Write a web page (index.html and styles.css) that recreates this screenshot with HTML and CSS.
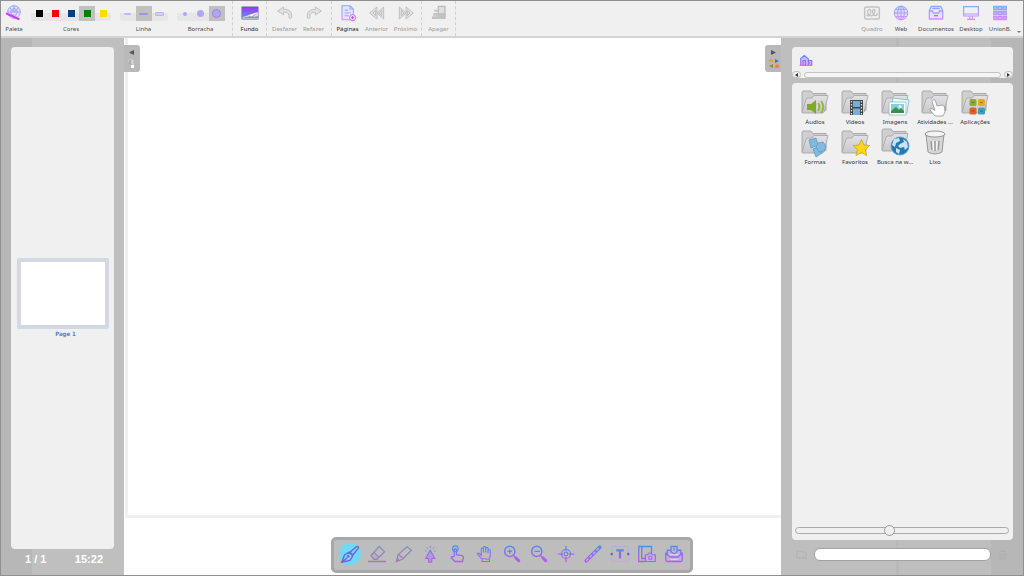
FILE: index.html
```html
<!DOCTYPE html>
<html lang="pt">
<head>
<meta charset="utf-8">
<title>Quadro</title>
<link rel="stylesheet" href="styles.css">
</head>
<body>
<svg class="defs" aria-hidden="true">
  <defs>
    <linearGradient id="g" gradientUnits="userSpaceOnUse" x1="0" y1="2" x2="0" y2="22"><stop offset="0" stop-color="#4f8cf0"/><stop offset="1" stop-color="#bf55ee"/></linearGradient>
    <linearGradient id="soft" gradientUnits="userSpaceOnUse" x1="0" y1="2" x2="0" y2="22"><stop offset="0" stop-color="#7d92c0"/><stop offset="1" stop-color="#a877b8"/></linearGradient>
    <linearGradient id="light" gradientUnits="userSpaceOnUse" x1="0" y1="2" x2="0" y2="22"><stop offset="0" stop-color="#83aaff"/><stop offset="1" stop-color="#d68cff"/></linearGradient>
    <linearGradient id="sky" x1="0" y1="0" x2="0" y2="1"><stop offset="0" stop-color="#a12ff0"/><stop offset="1" stop-color="#5b9ffa"/></linearGradient>
    <linearGradient id="fold" x1="0" y1="0" x2="0" y2="1"><stop offset="0" stop-color="#e2e2e5"/><stop offset="1" stop-color="#c8c8cc"/></linearGradient>
    <symbol id="folder" viewBox="0 0 28 28">
      <path d="M1 22V2.500q0-1.500 1.500-1.500h7q1 0 1.500 1l.5 1.500H25v17z" fill="#cfcfd2" stroke="#a4a4a8" stroke-width=".9"/>
      <path d="M1 22 5 9.500q.5-1.500 2-1.500h4l2-2.500h14L23.500 21q-.5 2-2.500 2H2q-1.500 0-1-1z" fill="url(#fold)" stroke="#a9a9ad" stroke-width=".9"/>
    </symbol>
  </defs>
</svg>
<div class="app">
  <header class="toolbar">
    <div class="group palette">
      <button class="tool"><svg viewBox="0 0 24 24"><circle cx="12" cy="10.500" r="9.500" fill="#e3e0fc"/><g fill="none" stroke="url(#light)" stroke-width="1.500"><circle cx="12" cy="10.500" r="9.500"/><circle cx="12" cy="10.500" r="5"/><path d="M12 1v10M3 10.500h18M5.500 4l6.500 7 6.500-7"/></g><path d="m1 13 18 8" stroke="#c63bf5" stroke-width="3" stroke-linecap="round"/></svg><span>Paleta</span></button>
    </div>
    <div class="group colors" role="group" aria-label="Cores">
      <div class="strip">
        <button class="pick" aria-label="Preto"><i class="swatch black"></i></button>
        <button class="pick" aria-label="Vermelho"><i class="swatch red"></i></button>
        <button class="pick" aria-label="Azul"><i class="swatch blue"></i></button>
        <button class="pick chosen" aria-label="Verde" aria-pressed="true"><i class="swatch green"></i></button>
        <button class="pick" aria-label="Amarelo"><i class="swatch yellow"></i></button>
      </div>
      <span>Cores</span>
    </div>
    <div class="group lines" role="group" aria-label="Linha">
      <div class="strip">
        <button class="pick" aria-label="Fina"><i class="line thin"></i></button>
        <button class="pick chosen" aria-label="Média" aria-pressed="true"><i class="line medium"></i></button>
        <button class="pick" aria-label="Grossa"><i class="line thick"></i></button>
      </div>
      <span>Linha</span>
    </div>
    <div class="group erasers" role="group" aria-label="Borracha">
      <div class="strip">
        <button class="pick" aria-label="Pequena"><i class="dot small"></i></button>
        <button class="pick" aria-label="Média"><i class="dot"></i></button>
        <button class="pick chosen" aria-label="Grande" aria-pressed="true"><i class="dot large"></i></button>
      </div>
      <span>Borracha</span>
    </div>
    <div class="group ruled">
      <button class="tool strong"><svg class="wide" viewBox="0 0 18 14"><rect x=".5" y=".5" width="17" height="13" rx="1" fill="url(#sky)" stroke="#a8a8c4"/><path d="m1 13 1-2 15-5v7z" fill="#d7dcde"/><path d="m1 12 9-2 6-3-4 4 5-1v2.500H1z" fill="#8d9ba0"/><path d="m7 9.500 9-3-5 4z" fill="#f6f8f8"/></svg><span>Fundo</span></button>
    </div>
    <div class="group ruled">
      <button class="tool" disabled><svg viewBox="0 0 24 24"><path d="M10 3 1 9l9 6v-4c6-.5 9 2 8 8 0 1 4 2 4 0 1-9-4-13-12-12z" class="ghost"/></svg><span>Desfazer</span></button>
      <button class="tool" disabled><svg viewBox="0 0 24 24"><path d="m14 3 9 6-9 6v-4c-6-.5-9 2-8 8 0 1-4 2-4 0C1 10 6 6 14 7z" class="ghost"/></svg><span>Refazer</span></button>
    </div>
    <div class="group ruled tight">
      <button class="tool strong"><svg viewBox="0 0 24 24"><path d="M3 1h12l5 5v16H3zM15 1v5h5M7 8h5M7 12h9M7 16h6" fill="#dfe6fb" stroke="url(#light)" stroke-width="1.600"/><circle cx="19" cy="19" r="4.500" fill="#f5e8ff" stroke="#d26cfa" stroke-width="1.500"/><path d="M19 16.500v5M16.500 19h5" stroke="#c44df5" stroke-width="1.600"/></svg><span>Páginas</span></button>
      <button class="tool" disabled><svg viewBox="0 0 24 24"><path d="M12 3 1 12l11 9zM22 3 12 12l10 9zM19 8l-4 4 4 4zM10 8l-4 4 4 4z" class="ghost"/></svg><span>Anterior</span></button>
      <button class="tool" disabled><svg viewBox="0 0 24 24"><path d="m12 3 11 9-11 9zM2 3l10 9-10 9zM5 8l4 4-4 4zM14 8l4 4-4 4z" class="ghost"/></svg><span>Próximo</span></button>
    </div>
    <div class="group ruled last">
      <button class="tool" disabled><svg viewBox="0 0 24 24"><path d="M11 2h10v15H11z" fill="#dedede" stroke="#bbb" stroke-width="2"/><path d="M12 12h10v9H12zM5 7h5v3H5zM4 12h9v4H3zM2 17h12v4H1z" fill="#c2c2c2"/></svg><span>Apagar</span></button>
    </div>
    <div class="modes">
      <button class="tool mode" disabled><svg viewBox="0 0 24 24"><g fill="none" stroke="#c3c3c3"><rect x="1" y="3" width="22" height="18" rx="2" stroke-width="2.200"/><path d="M4 15c3 4 8-3 6-7s-6 1-4 5 7 5 9 0 2-7-1-6 0 9 3 9 3-2 3-4" stroke-width="2"/></g></svg><span>Quadro</span></button>
      <button class="tool mode"><svg viewBox="0 0 24 24"><circle cx="12" cy="12" r="10.500" fill="#e2dafc"/><g fill="none" stroke="url(#light)" stroke-width="1.500"><circle cx="12" cy="12" r="10.200"/><ellipse cx="12" cy="12" rx="5" ry="10.200"/><path d="M12 2v20M2 12h20M4 6.500h16M4 17.500h16"/></g></svg><span>Web</span></button>
      <button class="tool mode"><svg viewBox="0 0 24 24"><path d="M5 2h14l3 6v13H2V8zM2 9h5l1 3h8l1-3h5M6 5h12" fill="#e8e0ff" stroke="url(#light)" stroke-width="1.900"/><path d="M9 16h6" stroke="#c060ee" stroke-width="2"/></svg><span>Documentos</span></button>
      <button class="tool mode"><svg viewBox="0 0 24 24"><path d="M1 2.500h22v14H1zM1 13.500h22M10 17v4m4-4v4M6 21.500h12" fill="none" stroke="url(#light)" stroke-width="1.700"/></svg><span>Desktop</span></button>
      <button class="tool mode"><svg viewBox="0 0 24 24"><g fill="#c6adff" stroke="url(#light)" stroke-width="1.800"><path d="M2.500 2h5v5h-5zM9.500 2h5v5h-5zM16.500 2h5v5h-5zM2.500 9.500h5v5h-5zM9.500 9.500h5v5h-5zM16.500 9.500h5v5h-5zM2.500 17h5v5h-5zM9.500 17h5v5h-5zM16.500 17h5v5h-5z"/></g></svg><span>UnionB.</span></button>
      <i class="more"></i>
    </div>
  </header>

  <main class="workspace">
    <aside class="pages">
      <div class="page-list">
        <figure class="page">
          <div class="thumb"></div>
          <figcaption>Page 1</figcaption>
        </figure>
      </div>
      <div class="status"><span>1 / 1</span><time>15:22</time></div>
    </aside>

    <section class="board" aria-label="Quadro">
      <div class="sheet"></div>
      <button class="tab tab-left" aria-label="Ocultar páginas"><svg viewBox="0 0 16 26"><path d="M10 4v5L5 6.500z" fill="#555"/><path d="M5 14h4v2H5zM5 17h4v2" fill="none" stroke="#ddd"/><path d="M7 19h3v3H7z" fill="#fff"/><path d="M6 14v4" stroke="#888"/></svg></button>
      <button class="tab tab-right" aria-label="Ocultar biblioteca"><svg viewBox="0 0 16 26"><path d="M6 4v5l5-2.500z" fill="#555"/><path d="M4 13h4v3H4z" fill="#e9a712"/><path d="M10 13v4l4-2z" fill="#2f80b4"/><path d="M8 18v4l-4-2z" fill="#939413"/><path d="m12 17.500 1 1.500h1.500l-1 1.500.5 1.500h-4l.5-1.500-1-1.500H11z" fill="#ef8722"/></svg></button>
    </section>

    <aside class="library">
      <div class="path">
        <button class="home" aria-label="Início"><svg viewBox="0 0 24 20"><path d="M2 8 9 2l7 6v11H3V8M7 19v-8h4v8M16 11h6v8h-6M18 14v2M1 19h22" fill="#cfb4ff" stroke="url(#g)" stroke-width="1.800"/></svg></button>
        <div class="scroller"><button class="arrow" aria-label="Esquerda"><i class="prev"></i></button><div class="bar"></div><button class="arrow" aria-label="Direita"><i class="next"></i></button></div>
      </div>
      <div class="shelf">
        <div class="folders">
          <button class="folder"><svg viewBox="0 0 28 28"><use href="#folder" width="28" height="28"/><path d="M6 14h4l5-4v14l-5-4H6z" fill="#7dab25"/><path d="M17 13q3 4 0 8M20 11q4.500 6 0 12" fill="none" stroke="#91bb34" stroke-width="2"/></svg><span>Áudios</span></button>
          <button class="folder"><svg viewBox="0 0 28 28"><use href="#folder" width="28" height="28"/><path d="M9 10h13v15H9z" fill="#3e474c"/><path d="M12 11h7v6h-7zM12 18.500h7V25h-7z" fill="#75afd7"/><path d="M10.500 11v14M20.500 11v14" stroke="#ddd" stroke-width="1.300" stroke-dasharray="1.500 1.500"/></svg><span>Vídeos</span></button>
          <button class="folder"><svg viewBox="0 0 28 28"><use href="#folder" width="28" height="28"/><path d="m12 8 16 2-2 13-16-2z" fill="#eef8fb" stroke="#71b5c6" stroke-width=".8"/><path d="M8 12h17v13H8z" fill="#fff" stroke="#8fbbc3" stroke-width=".8"/><path d="M10 14h13v9H10z" fill="#7fd0e1"/><path d="M10 23v-2l5-4 3 3 2-2 3 3v2z" fill="#38904a"/><circle cx="19" cy="16.500" r="1.500" fill="#fff"/></svg><span>Imagens</span></button>
          <button class="folder"><svg viewBox="0 0 28 28"><use href="#folder" width="28" height="28"/><path d="M12 10q2-1 2.500 1l1.500 5 5-1q2 0 2.500 2l.5 5-2 4h-8l-5-6q0-2 2-1.500l3 2-3-9q0-1 1-1.500z" fill="#fff" stroke="#929292" stroke-width=".8"/></svg><span>Atividades ...</span></button>
          <button class="folder"><svg viewBox="0 0 28 28"><use href="#folder" width="28" height="28"/><rect x="8.500" y="9" width="7" height="7" rx="1.500" fill="#8cae28"/><rect x="17" y="9" width="7" height="7" rx="1.500" fill="#dcae24"/><rect x="8.500" y="17.500" width="7" height="7" rx="1.500" fill="#dc6329"/><rect x="17" y="17.500" width="7" height="7" rx="1.500" fill="#429dc5"/><path d="M10.500 12.500h3M19 12.500h3M10.500 21h3M19 21h3" stroke="#0004" stroke-width="1.200"/></svg><span>Aplicações</span></button>
          <button class="folder"><svg viewBox="0 0 28 28"><use href="#folder" width="28" height="28"/><g fill="#80bade" stroke="#5e9cc4" stroke-width=".8"><path d="m8 10 7-2 2 7-7 3z"/><path d="m12 19 6-2 3 6-6 4z"/><path d="m17 13 5-1 3 4-2 5-5 1-3-5z"/></g></svg><span>Formas</span></button>
          <button class="folder"><svg viewBox="0 0 28 28"><use href="#folder" width="28" height="28"/><path d="m20.500 9.500 2.500 5.500 5.500.5-4 4 1 6-5-3-5.500 3 1.500-6-4.500-4 6-.5z" fill="#ffd51a" stroke="#cba319" stroke-width=".8"/></svg><span>Favoritos</span></button>
          <button class="folder raised"><svg viewBox="0 0 28 28"><use href="#folder" width="28" height="28"/><circle cx="19" cy="18" r="9" fill="#2578b2" stroke="#5ca1ce"/><path d="m13 11 5-1 1 3-4 2-1 4-3-2zM19 16l4-2-1-3 4 3 1 5-3 3-1-3-4 1-2-2zM15 20l4 2-1 4-3-2z" fill="#c8e4f2"/></svg><span>Busca na w...</span></button>
          <button class="folder"><svg viewBox="0 0 28 28"><path d="m5 4 2 18q7 4 14 0l2-18z" fill="#d5d5d5" stroke="#999"/><ellipse cx="14" cy="4" rx="10" ry="3" fill="#f4f4f4" stroke="#999"/><path d="m10 11 .8 9M14 11v10M18 11l-.8 9" stroke="#999" stroke-width="1.400"/><path d="m12 11 .5 9M16 11l-.3 9" stroke="#fff"/></svg><span>Lixo</span></button>
        </div>
        <input class="zoom" type="range" min="0" max="100" value="44" aria-label="Tamanho dos ícones">
      </div>
      <div class="search">
        <button class="faint" aria-label="Nova pasta"><svg viewBox="0 0 12 12"><path d="M1 2h4l1 1h4v6H1zM7 8l4 2" fill="none" stroke="#b0b0b0"/></svg></button>
        <input type="text" aria-label="Buscar">
        <button class="faint" aria-label="Apagar item"><svg viewBox="0 0 12 12"><path d="M2 2.500h8M5 1.500h2M3 4v6h6V4M5 4v6M7 4v6" fill="none" stroke="#afafaf"/></svg></button>
      </div>
    </aside>
  </main>

  <nav class="stylus" aria-label="Ferramentas">
    <button class="pen" aria-label="Caneta"><svg viewBox="0 0 24 24"><circle cx="12" cy="12" r="12" fill="#70d9f6"/><path d="m3 21 3-8 5-3 4 4-3 5zM3 21l6-5M12 10l7-6q3-1 2 2l-6 7z" fill="none" stroke="#6a66dc" stroke-width="1.500"/><circle cx="10" cy="14.500" r="1.400" fill="#8c55df"/></svg></button>
    <button aria-label="Borracha"><svg viewBox="0 0 24 24"><path d="m4 14 11-12 7 7-10 10H8zM8 10l7 7M0 22h24" fill="none" stroke="url(#soft)" stroke-width="1.700"/><path d="m5 14 4-4 6 6-3 3H8z" fill="#a99cc355"/></svg></button>
    <button aria-label="Marcador"><svg viewBox="0 0 24 24"><path d="m2 22 2-9L16 2l6 5L10 19zM5 13l6 5M2 22l3-4" fill="none" stroke="url(#soft)" stroke-width="1.700"/></svg></button>
    <button aria-label="Selecionar"><svg viewBox="0 0 24 24"><path d="m11 7 6 11h-4v5H9v-5H5z" fill="#b49ad8" stroke="url(#g)" stroke-width="1.500"/><path d="M11 1v3M6 3l1.500 2M16 3l-1.500 2M4 8h2M16 8h2" stroke="#7187ee" stroke-width="1.200"/></svg></button>
    <button aria-label="Interagir"><svg viewBox="0 0 24 24"><path d="M7 15V6q1.500-2 3 0v7l7 1q3 1 2 4l-1 4H8l-5-5q0-2 2-1.500z" fill="none" stroke="url(#g)" stroke-width="1.700"/><circle cx="8.500" cy="5" r="3.800" fill="none" stroke="#578bef" stroke-width="1.500"/></svg></button>
    <button aria-label="Mover"><svg viewBox="0 0 24 24"><path d="m7 18-5-6q0-2 2-1l3 3V5q1-2 3 0v5-7q1-2 3 0v7-6q2-2 3 0v7-4q2-2 3 0v8l-2 4zM8 19v3h10v-3" fill="none" stroke="url(#g)" stroke-width="1.500"/></svg></button>
    <button aria-label="Aumentar"><svg viewBox="0 0 24 24"><g fill="none" stroke="url(#g)"><circle cx="9" cy="8.500" r="6.800" stroke-width="2"/><path d="M6 8.500h6M9 5.500v6M14 14l2 2" stroke-width="1.700"/><path d="m17 17 4 4" stroke-width="4" stroke-linecap="round"/></g></svg></button>
    <button aria-label="Diminuir"><svg viewBox="0 0 24 24"><g fill="none" stroke="url(#g)"><circle cx="9" cy="8.500" r="6.800" stroke-width="2"/><path d="M6 8.500h6.100l-.1.100M14 14l2 2" stroke-width="1.700"/><path d="m17 17 4 4" stroke-width="4" stroke-linecap="round"/></g></svg></button>
    <button aria-label="Apontador"><svg viewBox="0 0 24 24"><g fill="none" stroke="url(#g)" stroke-width="1.600"><circle cx="12" cy="12" r="6"/><circle cx="12" cy="12" r="2.500"/><path d="M12 1v7m0 8v7M1 12l7 .1M16 12l7 .1"/></g></svg></button>
    <button aria-label="Linha"><svg viewBox="0 0 24 24"><path d="M3 21 21 3" stroke="url(#g)" stroke-width="5" stroke-linecap="round"/><path d="M3 21 21 3" stroke="#bdb0d0" stroke-width="2" stroke-dasharray="4 2.500"/></svg></button>
    <button aria-label="Texto"><svg viewBox="0 0 24 24"><path d="M1 2h22v20H1z" fill="none" stroke="url(#light)" opacity=".5"/><path d="M7 7h10M12 7v11" stroke="url(#g)" stroke-width="3"/><circle cx="1" cy="12" r="1.700" fill="#665be5"/><circle cx="23" cy="12" r="1.700" fill="#665be5"/></svg></button>
    <button aria-label="Capturar"><svg viewBox="0 0 24 24"><path d="M18 11V2H1v20h9M5 3v15h5" fill="none" stroke="url(#g)" stroke-width="1.800"/><path d="M10 13h3l1-2h4l1 2h4v9H10z" fill="#c3b4da" stroke="url(#g)" stroke-width="1.600"/><circle cx="16.500" cy="17" r="2.300" fill="none" stroke="#b45bea" stroke-width="1.500"/></svg></button>
    <button aria-label="Teclado"><svg viewBox="0 0 24 24"><path d="M8 7H3v4H1v9q0 2 2 2h18q2 0 2-2v-9h-2V7h-5M2 12l5 4h10l5-4M8 2h8v7l-4 3-4-3z" fill="#bcb1d7" stroke="url(#g)" stroke-width="1.700"/><path d="M6 13h12M7 19h10" stroke="#e4dcf8" stroke-width="1.500"/><path d="M12 4v4" stroke="#508be8" stroke-width="1.500"/></svg></button>
  </nav>
</div>
</body>
</html>
```

FILE: styles.css
```css
* { box-sizing: border-box; }
body { margin: 0; font-family: "Noto Sans", "Open Sans", sans-serif; font-size: 6px; line-height: 8px; color: #4c4c4c; }
button { padding: 0; border: 0; background: none; font: inherit; color: inherit; }
svg { display: block; overflow: visible; }
.defs { position: absolute; width: 0; height: 0; }

.app { position: relative; display: flex; flex-direction: column; height: 100vh; border: 1px solid #8f8f8f; background: #bebebe; }

.toolbar { display: flex; height: 37px; background: #f0f0f0; border-bottom: 2px solid #d3d3d3; }
.group { display: flex; justify-content: center; }
.palette { width: 26px; }
.colors, .lines, .erasers { flex-direction: column; justify-content: flex-start; align-items: center; gap: 4px; padding-top: 5px; }
.colors { width: 88px; }
.lines, .erasers { width: 57px; }
.erasers { margin-right: 3px; }
.strip { display: flex; background: linear-gradient(transparent 7px, #e6e6e6 7px); border-radius: 2px; }
.pick { display: flex; align-items: center; justify-content: center; width: 16px; height: 15px; }
.pick.chosen { background: #c0c0c0; }
.swatch { width: 7px; height: 7px; }
.black { background: #000; }
.red { background: #f00; }
.blue { background: #004080; }
.green { background: #008000; }
.yellow { background: #ffdc00; }
.line { border-radius: 1px; background: #c3b4f8; }
.thin { width: 7px; height: 2px; }
.medium { width: 9px; height: 2px; background: #a595d0; }
.thick { width: 9px; height: 4px; border: 1px solid #c3b0f8; background: #dfc9fa; }
.dot { width: 7px; height: 7px; border-radius: 50%; background: linear-gradient(#9daef8, #c69bf6); }
.dot.small { width: 4px; height: 4px; }
.dot.large { width: 9px; height: 9px; border: 1px solid #a07ee8; }

.ruled { padding: 0 3px; border-left: 1px dashed #cfcfcf; }
.tight { padding: 0 1px; }
.last { border-right: 1px dashed #cfcfcf; }
.tool { display: flex; flex-direction: column; align-items: center; gap: 4px; width: 29px; padding-top: 4px; white-space: nowrap; }
.ruled:nth-child(5) .tool, .last .tool { width: 27px; }
.palette .tool { width: 26px; }
.tool svg { width: 16px; height: 16px; }
.tool svg.wide { width: 18px; }
.strong { color: #222; }
.tool:disabled { color: #999; }
.ghost { fill: #e2e2e2; stroke: #c0c0c0; stroke-width: 1.5; }
.modes { display: flex; align-items: flex-start; gap: 5px; margin-left: auto; padding-right: 2px; }
.mode { width: auto; min-width: 24px; }
.more { align-self: flex-end; margin-bottom: 3px; border: 2px solid transparent; border-top-color: #777; border-bottom: 0; }

.workspace { flex: 1; display: flex; min-height: 0; }
.pages { width: 123px; display: flex; flex-direction: column; padding: 9px 10px 0; background: linear-gradient(90deg, #b7b7b7 31px, #bfbfbf 31px); }
.page-list { flex: 1; display: flex; align-items: center; justify-content: center; padding-top: 1px; border-radius: 4px; background: #f0f0f0; }
.page { margin: 0; width: 92px; text-align: center; }
.thumb { height: 71px; border: 4px solid #d2d8e4; border-radius: 2px; background: #fff; }
.page figcaption { padding-left: 6px; font-family: "DejaVu Sans Condensed", "DejaVu Sans", sans-serif; font-weight: bold; line-height: 10px; color: #5b80c4; }
.status { display: flex; justify-content: space-between; height: 26px; padding: 3px 11px 0 14px; font: bold 11px/14px "Liberation Sans", sans-serif; color: #fff; }

.board { position: relative; flex: 1; background: #fff; }
.sheet { height: calc(100% - 57px); margin-left: 1px; border: solid #f0f0f0; border-width: 0 0 3px 3px; }
.tab { position: absolute; top: 7px; width: 16px; height: 27px; background: #b9b9b9; }
.tab-left { left: 0; border-radius: 0 3px 3px 0; }
.tab-right { right: 0; border-radius: 3px 0 0 3px; }

.library { width: 242px; display: flex; flex-direction: column; gap: 5px; padding: 9px 10px 0 11px; background: linear-gradient(90deg, transparent 115px, #b9b9b9 115px 118px, transparent 118px 210px, #b7b7b7 210px); }
.path, .shelf { border-radius: 4px; background: #f0f0f0; }
.path { display: flex; flex-direction: column; justify-content: space-between; height: 31px; }
.home { width: 14px; margin: 7px 0 0 7px; }
.home svg { width: 14px; height: 12px; }
.scroller { display: flex; align-items: center; gap: 3px; }
.bar { flex: 1; height: 6px; border: 1px solid #c3c3c3; border-radius: 3px; background: #f5f5f5; }
.arrow { display: flex; align-items: center; justify-content: center; width: 9px; height: 7px; border: 1px solid #bbb; border-radius: 4px; }
.prev, .next { border: 2px solid transparent; }
.prev { border-right: 3px solid #333; border-left: 0; }
.next { border-left: 3px solid #333; border-right: 0; }
.shelf { flex: 1; display: flex; flex-direction: column; justify-content: space-between; padding: 7px 4px 4px 3px; }
.folders { display: grid; grid-template-columns: repeat(auto-fill, 40px); grid-auto-rows: 40px; }
.folder { display: flex; flex-direction: column; align-items: center; justify-content: flex-start; color: #333; white-space: nowrap; }
.folder svg { width: 28px; height: 28px; }
.folder.raised svg { margin: -2px 0 2px; }
.zoom { appearance: none; width: 100%; height: 12px; margin: 0; background: none; }
.zoom::-webkit-slider-runnable-track { height: 7px; border: 1px solid #aaa; border-radius: 4px; background: #efefef; }
.zoom::-webkit-slider-thumb { appearance: none; width: 11px; height: 11px; margin-top: -3px; border: 1px solid #999; border-radius: 50%; background: #f0f0f0; }
.search { display: flex; align-items: center; gap: 6px; height: 30px; padding: 0 4px 11px; }
.search input { flex: 1; min-width: 0; height: 13px; padding: 0 6px; border: 1px solid #a2a2a2; border-radius: 6px; background: #fff; font: inherit; }
.faint svg { width: 12px; height: 12px; }

.stylus { position: absolute; left: 50%; bottom: 2px; transform: translateX(-50%); display: flex; gap: 5px; padding: 3px 5px 5px; border: 3px solid #a8a8a8; border-radius: 5px; background: #bdbdbd; }
.stylus button { display: flex; align-items: center; justify-content: center; width: 22px; height: 22px; }
.stylus svg { width: 18px; height: 18px; }
.stylus .pen svg { width: 22px; height: 22px; }
```
